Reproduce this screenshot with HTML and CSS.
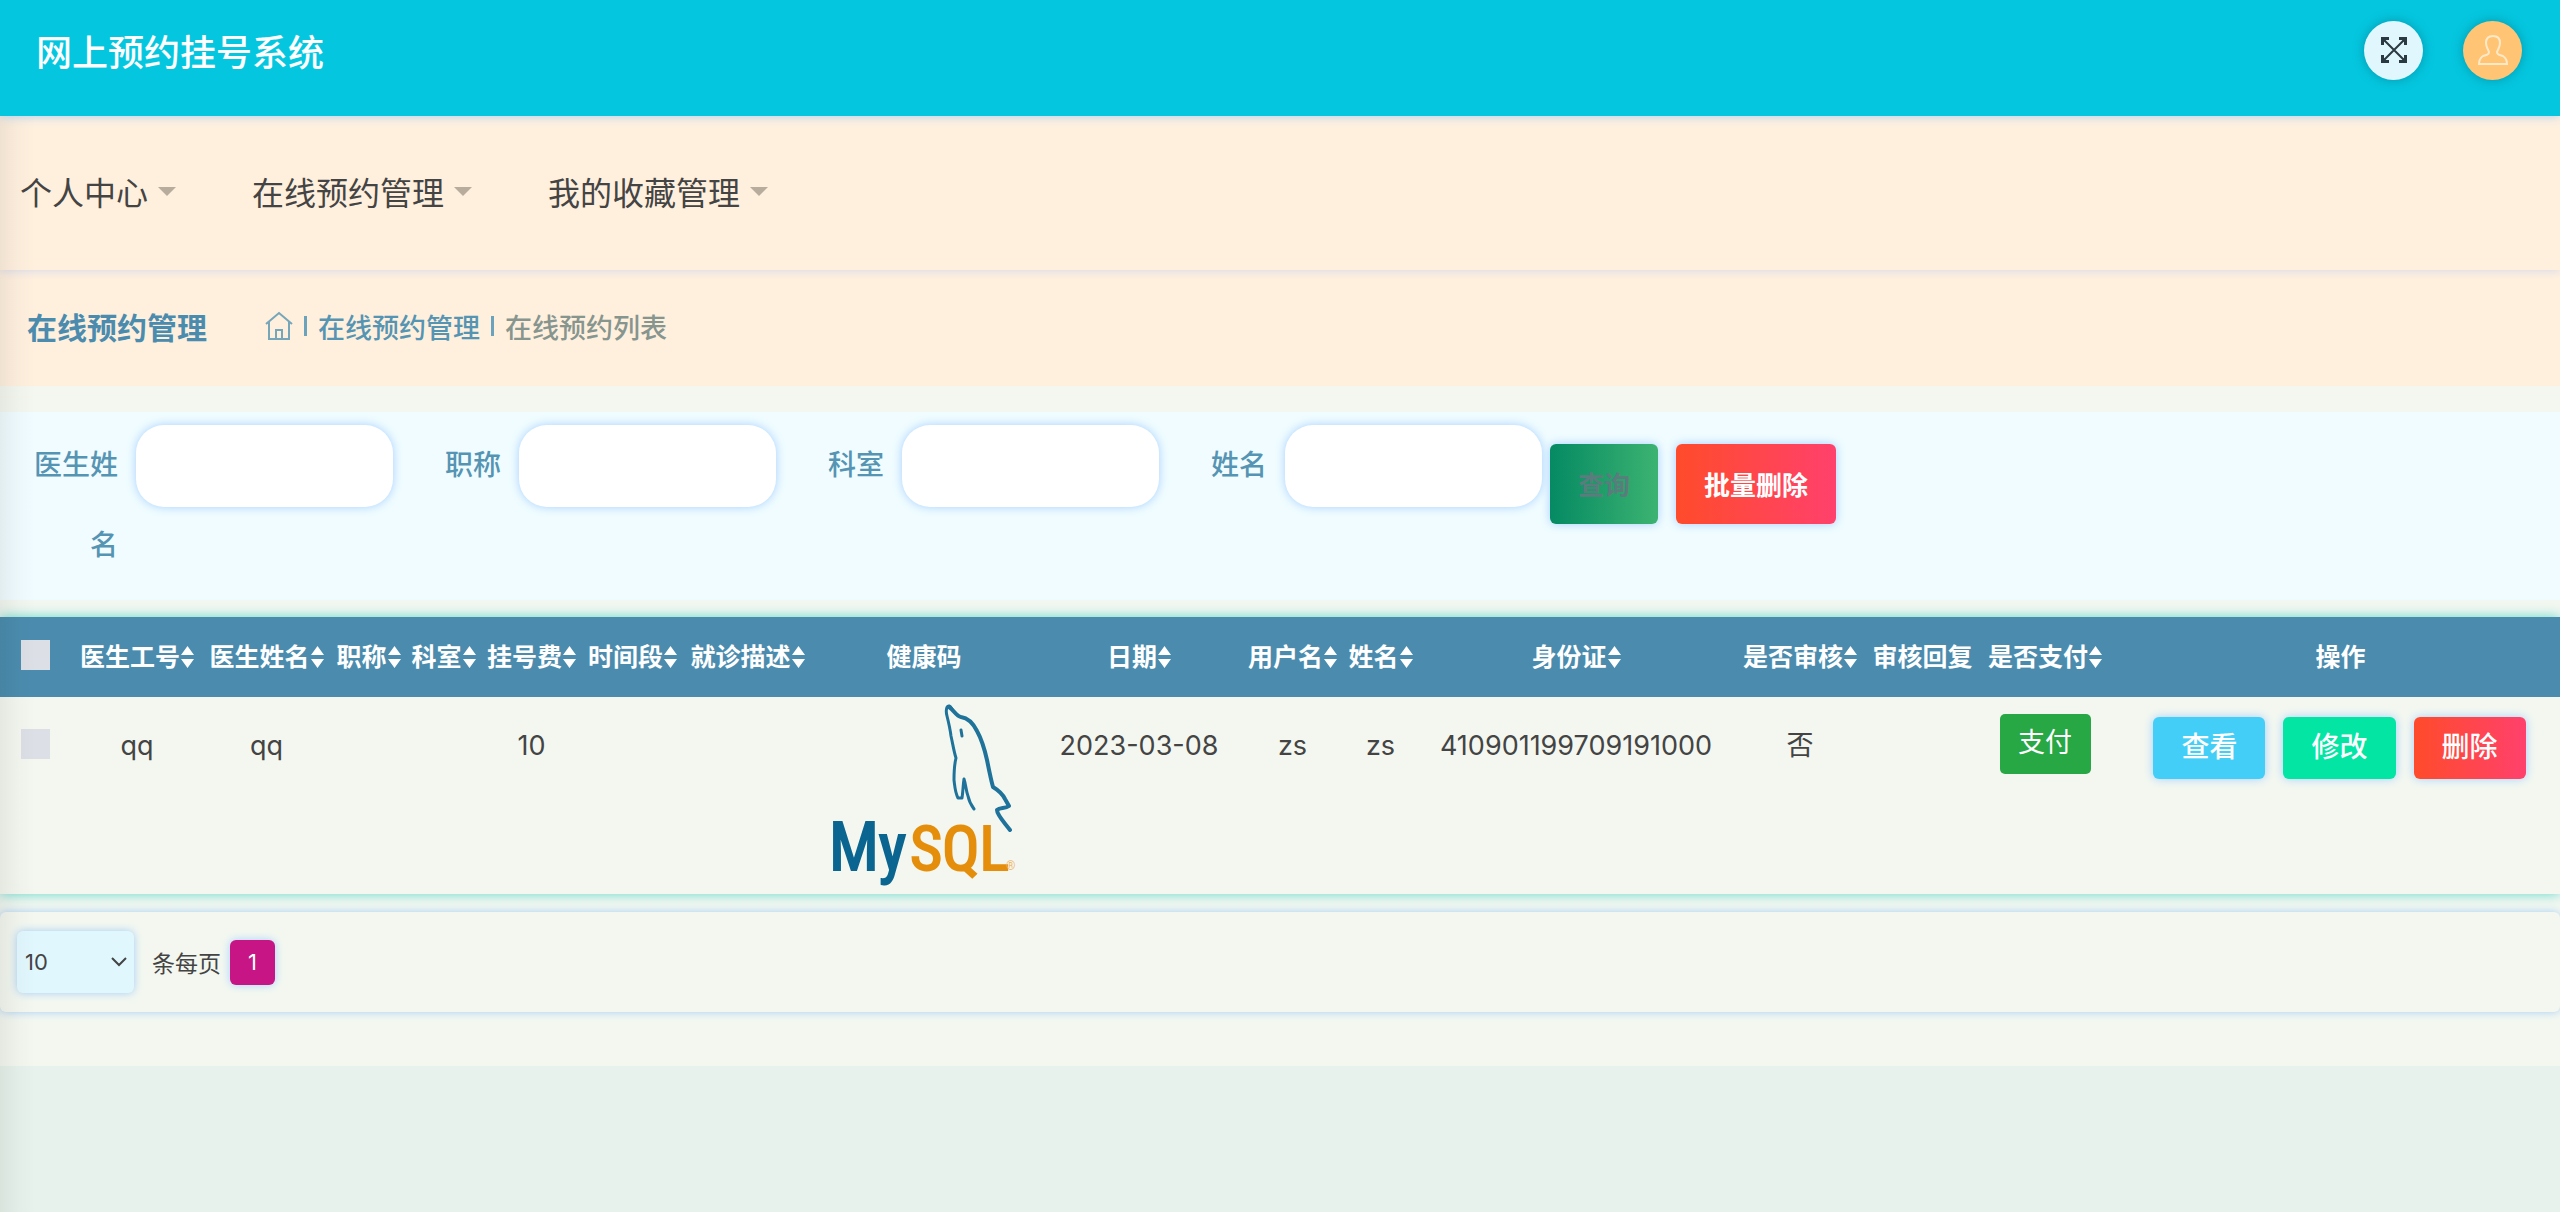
FILE: index.html
```html
<!DOCTYPE html>
<html lang="zh-CN">
<head>
<meta charset="utf-8">
<title>网上预约挂号系统</title>
<link rel="stylesheet" href="styles.css">
</head>
<body>
<svg class="defs" width="0" height="0" aria-hidden="true">
  <symbol id="sort" viewBox="0 0 13 22"><path d="M6.500 0 13 9H0zM0 13h13l-6.500 9z" fill="currentColor"/></symbol>
</svg>
<header class="topbar">
  <h1 class="brand">网上预约挂号系统</h1>
  <div class="tools">
    <button class="round" type="button" aria-label="全屏">
      <svg width="28" height="28" viewBox="0 0 28 28" fill="none" stroke="#2b3a42" stroke-width="2"><path d="M2 2 26 26M26 2 2 26"/><path d="M1 1h8v3H6L4 6v3H1zM27 1v8h-3V6l-2-2h-3V1zM27 27h-8v-3h3l2-2v-3h3zM1 27v-8h3v3l2 2h3v3z" fill="#2b3a42" stroke="none"/></svg>
    </button>
    <button class="round user" type="button" aria-label="用户">
      <svg width="30" height="32" viewBox="0 0 30 32" fill="none" stroke="#ffe9c8" stroke-width="2"><path d="M15 2c5 0 7 3 7 7 0 4-2 6-3 9 0 3 3 3 6 4 3 2 4 4 4 8H1c0-4 1-6 4-8 3-1 6-1 6-4-1-3-3-5-3-9 0-4 2-7 7-7z"/></svg>
    </button>
  </div>
</header>
<nav class="menu">
  <a href="#">个人中心<span class="caret"></span></a>
  <a href="#">在线预约管理<span class="caret"></span></a>
  <a href="#">我的收藏管理<span class="caret"></span></a>
</nav>
<main class="content">
  <div class="crumbs">
    <h2>在线预约管理</h2>
    <div class="trail">
      <a href="#" aria-label="首页"><svg width="28" height="30" viewBox="0 0 28 30" fill="none" stroke="currentColor" stroke-width="2"><path d="M1 13 14 2l13 11M4 11v17h20V11M11 28v-9h6v9"/></svg></a>
      <span class="bar"></span>
      <a href="#">在线预约管理</a>
      <span class="bar"></span>
      <span class="here">在线预约列表</span>
    </div>
  </div>
  <form class="search">
    <div class="field"><label for="doctor">医生姓名</label><input id="doctor" type="text"></div>
    <div class="field"><label for="rank">职称</label><input id="rank" type="text"></div>
    <div class="field"><label for="dept">科室</label><input id="dept" type="text"></div>
    <div class="field"><label for="name">姓名</label><input id="name" type="text"></div>
    <div class="actions">
      <button class="btn query" type="button">查询</button>
      <button class="btn danger" type="button">批量删除</button>
    </div>
  </form>
  <table class="list">
    <colgroup><col class="c-check"><col class="c-no"><col class="c-4"><col class="c-2"><col class="c-2"><col class="c-3"><col class="c-3"><col class="c-4"><col class="c-img"><col class="c-date"><col class="c-3"><col class="c-2"><col class="c-id"><col class="c-audit"><col class="c-reply"><col class="c-audit"><col class="c-ops"></colgroup>
    <thead>
      <tr>
        <th><input type="checkbox" aria-label="全选"></th>
        <th>医生工号<svg class="sort"><use href="#sort"/></svg></th>
        <th>医生姓名<svg class="sort"><use href="#sort"/></svg></th>
        <th>职称<svg class="sort"><use href="#sort"/></svg></th>
        <th>科室<svg class="sort"><use href="#sort"/></svg></th>
        <th>挂号费<svg class="sort"><use href="#sort"/></svg></th>
        <th>时间段<svg class="sort"><use href="#sort"/></svg></th>
        <th>就诊描述<svg class="sort"><use href="#sort"/></svg></th>
        <th>健康码</th>
        <th>日期<svg class="sort"><use href="#sort"/></svg></th>
        <th>用户名<svg class="sort"><use href="#sort"/></svg></th>
        <th>姓名<svg class="sort"><use href="#sort"/></svg></th>
        <th>身份证<svg class="sort"><use href="#sort"/></svg></th>
        <th>是否审核<svg class="sort"><use href="#sort"/></svg></th>
        <th>审核回复</th>
        <th>是否支付<svg class="sort"><use href="#sort"/></svg></th>
        <th class="ops-head">操作</th>
      </tr>
    </thead>
    <tbody>
      <tr>
        <td><input type="checkbox" aria-label="选择"></td>
        <td>qq</td>
        <td>qq</td>
        <td></td>
        <td></td>
        <td>10</td>
        <td></td>
        <td></td>
        <td class="pic">
          <svg class="logo" width="200" height="186" viewBox="0 0 200 186" role="img" aria-label="MySQL">
            <g fill="none" stroke="#1f7299" stroke-linecap="round" stroke-linejoin="round">
              <path stroke-width="3" d="M128 6c-4-7-7-1-5 7 2 8 3 12 4 20 2 9 3 16 5 22-2 8-2 15-2 22 1 8 1 12 4 18h4c1-6 1-12 2-19 2 6 2 12 4 17 1 5 3 9 6 13"/>
              <path stroke-width="4" d="M125 4c5 3 7 9 12 10 7 1 12 6 16 14 5 9 8 20 10 29 2 10 4 20 6 27 5 3 9 6 12 12l4 7c-4 3-9 1-12 4 0 5 7 12 13 20"/>
              <path stroke-width="3" d="m137 27 1 6"/>
            </g>
            <text class="logo-my" x="5" y="167">My</text>
            <text class="logo-sql" x="86" y="167">SQL</text>
            <text class="logo-reg" x="182" y="167">®</text>
          </svg>
        </td>
        <td>2023-03-08</td>
        <td>zs</td>
        <td>zs</td>
        <td>410901199709191000</td>
        <td>否</td>
        <td></td>
        <td class="pay-cell"><button class="pay" type="button">支付</button></td>
        <td class="ops-cell">
          <div class="ops">
            <button class="btn small view" type="button">查看</button>
            <button class="btn small edit" type="button">修改</button>
            <button class="btn small danger" type="button">删除</button>
          </div>
        </td>
      </tr>
    </tbody>
  </table>
  <div class="pager">
    <span class="pick">
      <select id="size"><option>10</option></select>
      <svg width="18" height="12" viewBox="0 0 18 12" fill="none" stroke="#444" stroke-width="2"><path d="m2 2 7 7 7-7"/></svg>
    </span>
    <label for="size">条每页</label>
    <button class="page" type="button">1</button>
  </div>
</main>
</body>
</html>
```

FILE: styles.css
```css
* { box-sizing: border-box; }

body {
  margin: 0;
  min-height: 100vh;
  position: relative;
  background: #e6f2eb;
  color: #444;
  font-family: Inter, "Noto Sans CJK SC", sans-serif;
  font-size: 26px;
}

body::after {
  content: "";
  position: absolute;
  top: 0;
  bottom: 0;
  left: 0;
  width: 36px;
  background: linear-gradient(to right, rgba(0, 0, 0, .06), rgba(0, 0, 0, .02) 50%, transparent);
  pointer-events: none;
}

a { color: inherit; text-decoration: none; }
button, input, select { font: inherit; border: 0; margin: 0; }
.defs { position: absolute; }

.topbar {
  display: flex;
  align-items: center;
  justify-content: space-between;
  height: 116px;
  padding: 0 38px 16px 36px;
  background: #04c7df;
  position: relative;
  z-index: 1;
  box-shadow: 0 0 10px #a6cdf5;
}
.brand { margin: 0; color: #fff; font-size: 36px; font-weight: 500; }
.tools { display: flex; gap: 40px; }
.round {
  display: flex;
  align-items: center;
  justify-content: center;
  width: 59px;
  height: 59px;
  padding: 0;
  border-radius: 50%;
  background: #e1f7fe;
  box-shadow: 0 0 12px rgba(0, 60, 80, .35);
}
.user { background: #ffc574; }

.menu {
  display: flex;
  align-items: center;
  gap: 76px;
  height: 154px;
  padding: 0 20px 4px;
  background: #fff0de;
  font-size: 32px;
  box-shadow: 0 2px 8px #dcdde9;
  position: relative;
}
.menu a { display: flex; align-items: center; gap: 10px; }
.caret {
  border: 9px solid transparent;
  border-top-color: #b8ac9d;
  border-bottom: 0;
}

.content { background: #f3f7f0; padding-bottom: 54px; }
.crumbs {
  display: flex;
  align-items: center;
  gap: 58px;
  height: 116px;
  padding: 0 27px 4px;
  background: #fff0de;
  color: #5594b2;
}
.crumbs h2 { margin: 0; font-size: 30px; font-weight: 700; color: #4b8cae; }
.trail { display: flex; align-items: center; gap: 11px; font-size: 27px; font-weight: 500; }
.trail svg { display: block; opacity: .8; }
.bar { width: 3px; height: 20px; background: #6ba2bc; }
.here { color: #87958f; }

.search {
  display: flex;
  align-items: flex-start;
  gap: 22px;
  margin-top: 26px;
  padding: 13px 32px 15px;
  background: #f0fcff;
}
.field { display: flex; align-items: flex-start; gap: 18px; }
.field label {
  width: 86px;
  text-align: right;
  font-size: 28px;
  font-weight: 500;
  line-height: 80px;
  color: #5594b2;
}
.field input {
  width: 257px;
  height: 82px;
  padding: 0 20px;
  border-radius: 28px;
  background: #fff;
  box-shadow: 0 0 10px #a5d0ff;
}
.actions { display: flex; gap: 18px; margin: 19px 0 0 -14px; }
.btn {
  padding: 0 28px 2px;
  height: 80px;
  border-radius: 6px;
  color: #fff;
  font-size: 26px;
  font-weight: 700;
  box-shadow: 0 0 10px #a5d0ff;
}
.query { color: #5b7c7c; background: linear-gradient(to right, #058a63, #3cb371); }
.danger { background: linear-gradient(to right, #ff4b2b, #ff416c); }

.list {
  width: 100%;
  margin-top: 17px;
  table-layout: fixed;
  border-collapse: collapse;
  box-shadow: 0 0 12px #5fd8cc;
  background: #f3f7f0;
}
.c-check { width: 72px; }
.c-no { width: 130px; }
.c-4 { width: 129px; }
.c-2 { width: 75px; }
.c-3 { width: 101px; }
.c-img { width: 224px; }
.c-date { width: 206px; }
.c-id { width: 316px; }
.c-audit { width: 132px; }
.c-reply { width: 113px; }
.c-ops { width: 449px; }
.list th {
  height: 80px;
  padding: 0 0 4px;
  background: #4b8cae;
  color: #fff;
  font-size: 25px;
  font-weight: 700;
  white-space: nowrap;
}
.list .ops-head { padding-left: 10px; }
.sort { width: 13px; height: 22px; margin-left: 1px; vertical-align: -2px; }
.list td {
  height: 197px;
  padding: 28px 0 0;
  vertical-align: top;
  text-align: center;
  font-size: 27px;
  line-height: 42px;
}
.list input {
  appearance: none;
  display: block;
  width: 29px;
  height: 30px;
  margin-left: 21px;
  background: #dddfe6;
}
.list td input { margin-top: 4px; }
.list .pic { padding-top: 6px; }
.logo { display: block; margin: 0 auto; }
.logo text {
  font-family: "Liberation Sans Narrow", "Roboto Condensed", "DejaVu Sans Condensed", sans-serif;
  font-size: 66px;
  font-weight: 400;
  stroke-width: 2;
}
.logo .logo-my { fill: #0a6590; stroke: #0a6590; }
.logo .logo-sql { fill: #e48e0c; stroke: #e48e0c; font-size: 62px; }
.logo .logo-reg { fill: #f2b874; font-size: 12px; }
.list .pay-cell { padding-top: 17px; }
.pay {
  display: block;
  width: 91px;
  height: 60px;
  margin: 0 auto;
  padding: 0 0 2px;
  border-radius: 5px;
  background: #28a745;
  color: #fff;
  font-size: 27px;
}
.list .ops-cell { padding: 20px 0 0 8px; }
.ops { display: flex; justify-content: center; gap: 18px; }
.small { height: 62px; font-size: 28px; font-weight: 500; }
.view { background: #43cef7; }
.edit { background: #02e5a3; }

.pager {
  display: flex;
  align-items: center;
  height: 100px;
  margin-top: 18px;
  padding: 0 17px;
  border-radius: 6px;
  background: #f3f7f0;
  box-shadow: 0 0 8px #a5cdf5;
  font-size: 23px;
}
.pick { display: grid; align-items: center; margin-right: 18px; }
.pick select, .pick svg { grid-area: 1 / 1; }
.pick svg { justify-self: end; margin-right: 6px; pointer-events: none; }
.pick select {
  appearance: none;
  width: 117px;
  height: 62px;
  padding: 0 8px;
  border-radius: 6px;
  background: #e1f7fe;
  color: #444;
  font-size: 22px;
  box-shadow: 0 0 8px #a5cdf5;
}
.page {
  width: 45px;
  height: 45px;
  margin-left: 9px;
  padding: 0;
  border-radius: 6px;
  background: #c71585;
  color: #fff;
  font-size: 22px;
  box-shadow: 0 0 8px #a5d0ff;
}
```
